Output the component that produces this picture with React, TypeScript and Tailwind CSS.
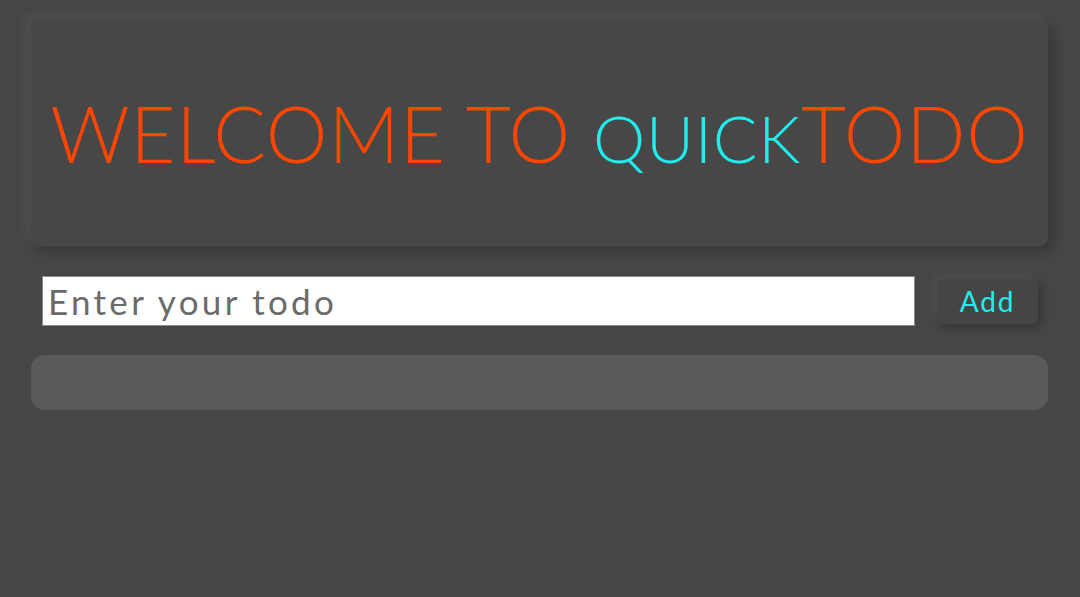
export default function App() {
  return (
    <div
      className="min-h-[597px] w-full bg-[#464646] pt-[19px] pl-[31px] pr-[32px]"
      style={{ fontFamily: 'Lato, "Open Sans", sans-serif' }}
    >
      <header className="flex h-[227px] items-center justify-center rounded-lg bg-[#474747] shadow-[-6px_-6px_12px_rgba(255,255,255,0.05),6px_6px_12px_rgba(0,0,0,0.2)]">
        <h1 className="whitespace-nowrap text-[78px] font-light leading-none tracking-[0.8px] text-[#ff4500]">
          WELCOME TO{' '}
          <span className="text-[66px] text-[#1eeeee]">QUICK</span>TODO
        </h1>
      </header>

      <div className="mt-[30px] flex items-center pl-[11px] pr-[10px]">
        <input
          type="text"
          placeholder="Enter your todo"
          className="h-[50px] w-[873px] border border-[#8a8a8a] bg-white px-[5px] text-[35px] tracking-[3.3px] text-[#333] outline-none placeholder:text-[#6b6b6b]"
        />
        <button className="ml-auto h-[45px] w-[101px] rounded-md bg-[#454545] text-[28px] tracking-[1.8px] text-[#1eeeee] shadow-[-4px_-4px_10px_rgba(255,255,255,0.06),4px_4px_10px_rgba(0,0,0,0.25)]">
          Add
        </button>
      </div>

      <ul className="mt-[29px] h-[55px] rounded-[14px] bg-[#5a5a5a]"></ul>
    </div>
  );
}
